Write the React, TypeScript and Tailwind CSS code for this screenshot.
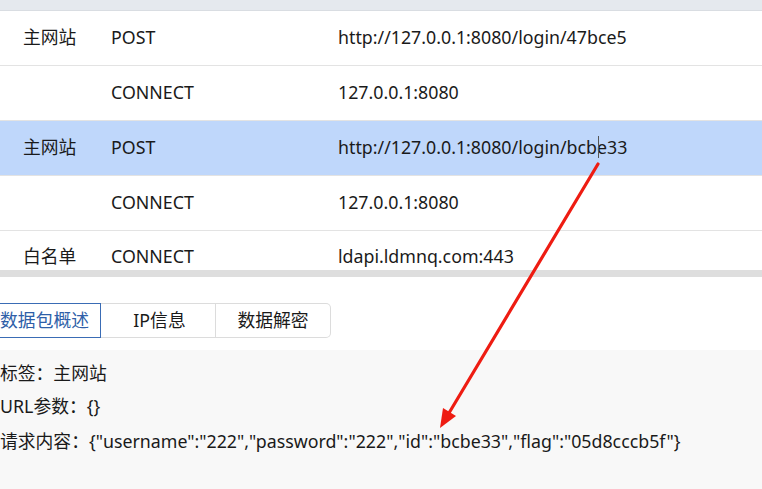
import React from "react";

const rows = [
  { tag: "主网站", method: "POST", url: "http://127.0.0.1:8080/login/47bce5", sel: false },
  { tag: "", method: "CONNECT", url: "127.0.0.1:8080", sel: false },
  { tag: "主网站", method: "POST", url: "http://127.0.0.1:8080/login/bcbe33", sel: true },
  { tag: "", method: "CONNECT", url: "127.0.0.1:8080", sel: false },
];

export default function App() {
  return (
    <div
      className="relative w-[762px] h-[489px] overflow-hidden bg-white text-[17.8px] text-[#1a1a1a]"
      style={{ fontFamily: '"Noto Sans", "Noto Sans CJK SC", sans-serif' }}
    >
      <div className="h-[11px] bg-[#e5e9ee] border-b border-[#d9dde2]" />
      {rows.map((r, i) => (
        <div
          key={i}
          className={`flex items-center h-[55px] pb-[2px] border-b border-[#e3e3e3] ${r.sel ? "bg-[#bfd7fb]" : ""}`}
        >
          <div className="w-[111px] pl-[23px]">{r.tag}</div>
          <div className="w-[227px]">{r.method}</div>
          <div>{r.url}</div>
        </div>
      ))}
      <div className="flex items-center h-[39px] overflow-hidden">
        <div className="w-[111px] pl-[23px] pt-[12px]">白名单</div>
        <div className="w-[227px] pt-[12px]">CONNECT</div>
        <div className="pt-[12px]">ldapi.ldmnq.com:443</div>
      </div>
      <div className="h-[7px] bg-[#dedede]" />
      <div className="h-[26px]" />
      <div className="flex h-[35px] ml-[-10px]">
        <div className="flex items-center justify-end pr-[11px] w-[111px] border border-[#3a6cb5] text-[#2f5fa8]">数据包概述</div>
        <div className="flex items-center justify-center pl-[3px] w-[115px] border-y border-r border-[#dcdcdc]">IP信息</div>
        <div className="flex items-center justify-center w-[115px] border-y border-r border-[#dcdcdc] rounded-r-[5px]">数据解密</div>
      </div>
      <div className="mt-[12px] h-[200px] bg-[#f8f8f8] pt-[11px] flex flex-col gap-[8px]">
        <div className="leading-[25px]">标签：主网站</div>
        <div className="leading-[25px]">URL参数：{"{}"}</div>
        <div className="leading-[25px] mt-[2px]">{'请求内容：{"username":"222","password":"222","id":"bcbe33","flag":"05d8cccb5f"}'}</div>
      </div>
      <div className="absolute left-[598px] top-[136px] w-px h-[22px] bg-[#555]" />
      <svg className="absolute left-0 top-0 pointer-events-none" width="762" height="489">
        <line x1="598" y1="164" x2="446" y2="418" stroke="#ee1c12" strokeWidth="3.2" strokeLinecap="round" />
        <polygon points="440,428 443,408 456,416" fill="#ee1c12" />
      </svg>
    </div>
  );
}
